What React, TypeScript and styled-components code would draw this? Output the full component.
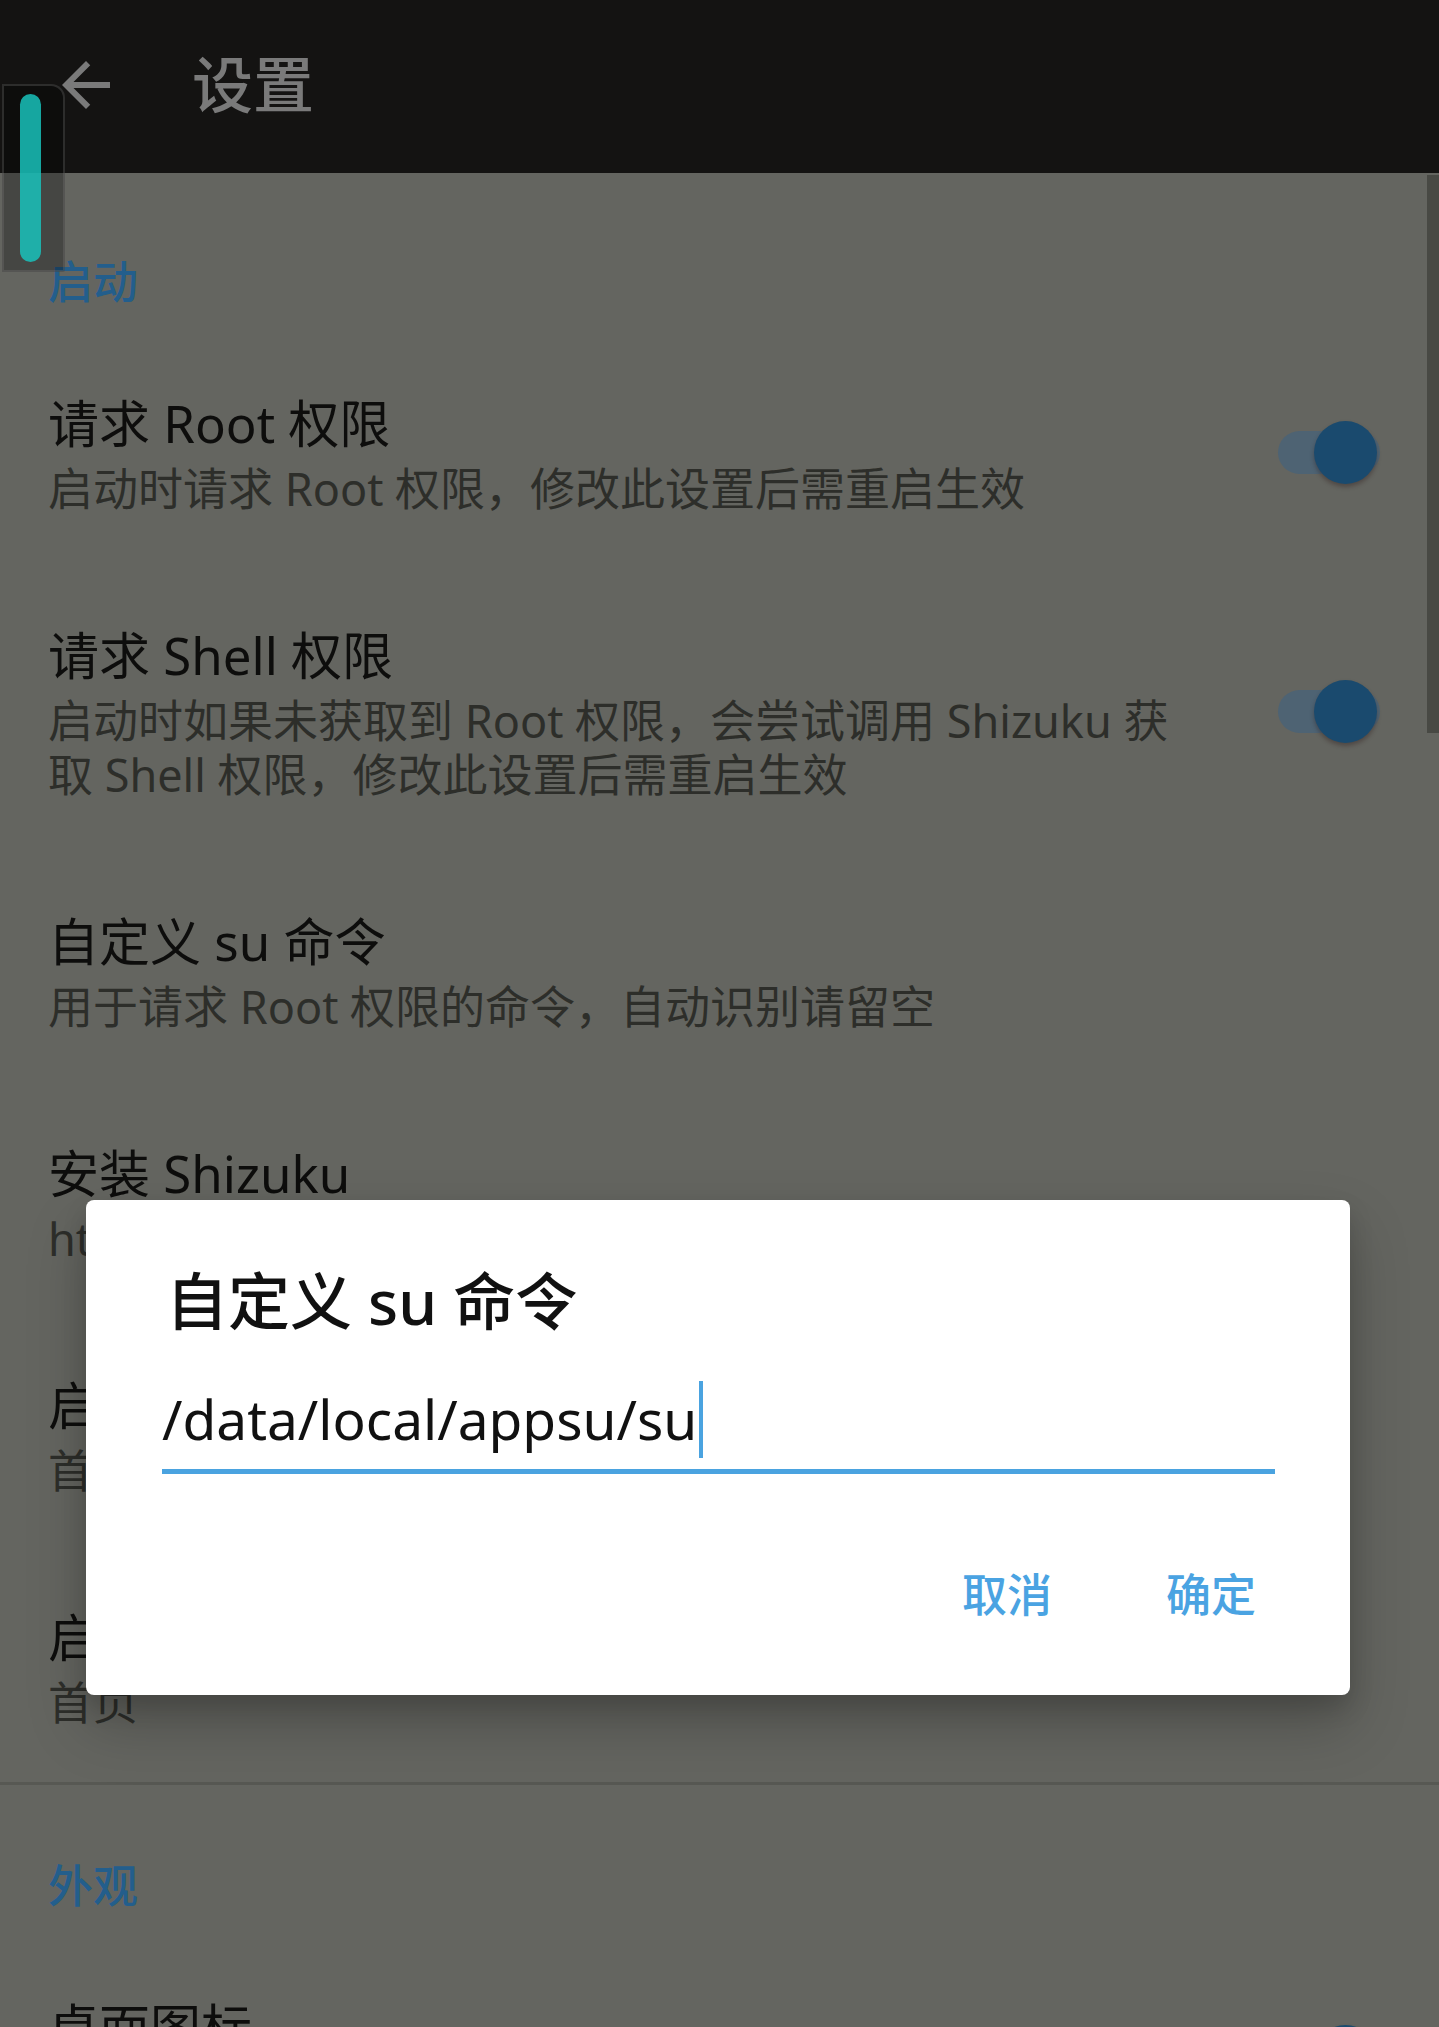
import React from 'react'
import styled, { createGlobalStyle } from 'styled-components'

const GlobalStyle = createGlobalStyle`
  html, body {
    margin: 0;
    padding: 0;
    background: #646560;
  }
  body {
    font-family: 'Noto Sans', 'Noto Sans CJK SC', sans-serif;
    overflow: hidden;
  }
`

const Screen = styled.div`
  position: relative;
  width: 1439px;
  height: 2027px;
  overflow: hidden;
  background: #646560;
`

const TopBar = styled.header`
  display: flex;
  align-items: center;
  height: 173px;
  padding: 0 0 4px 50px;
  box-sizing: border-box;
  background: #141312;
`
const BackIcon = styled.svg`
  width: 72px;
  height: 72px;
  flex-shrink: 0;
  fill: #7a7a7a;
`
const PageTitle = styled.h1`
  margin: 0 0 0 70px;
  font-size: 61px;
  font-weight: 500;
  line-height: 1;
  color: #7a7a7a;
`

const Section = styled.section<{ $divider?: boolean }>`
  border-bottom: ${p => (p.$divider ? '3px solid #575853' : 'none')};
`
const Category = styled.div<{ $top?: number }>`
  padding: ${p => p.$top ?? 79}px 48px 24px;
  font-size: 45px;
  line-height: 60px;
  font-weight: 500;
  color: #235e8c;
`
const Item = styled.div`
  display: flex;
  align-items: center;
  justify-content: space-between;
  gap: 40px;
  padding: 52px 59px 52px 48px;
`
const ItemText = styled.div`
  display: flex;
  flex-direction: column;
  gap: 4px;
  flex: 1;
  min-width: 0;
`
const ItemTitle = styled.div`
  font-size: 51px;
  line-height: 70px;
  color: #0d0d0c;
  white-space: nowrap;
`
const ItemSummary = styled.div`
  font-size: 45px;
  line-height: 54px;
  color: #2d2e2a;
  white-space: nowrap;
`

const Switch = styled.div`
  position: relative;
  width: 102px;
  height: 63px;
  flex-shrink: 0;
`
const Track = styled.div`
  position: absolute;
  left: 0;
  right: 0;
  top: 10px;
  height: 43px;
  border-radius: 22px;
  background: #4e6373;
`
const Thumb = styled.div`
  position: absolute;
  right: 3px;
  top: 0;
  width: 63px;
  height: 63px;
  border-radius: 50%;
  background: #1a4a6e;
  box-shadow: 0 3px 4px rgba(40, 20, 20, 0.35);
`

// floating fast-scroll handle on the left edge
const ScrollHandle = styled.div`
  position: absolute;
  left: 2px;
  top: 84px;
  width: 63px;
  height: 188px;
  box-sizing: border-box;
  background: rgba(0, 0, 0, 0.3);
  border: 2px solid rgba(120, 120, 120, 0.3);
  border-radius: 0 14px 2px 0;
`
const HandleBar = styled.div`
  position: absolute;
  left: 16px;
  top: 8px;
  width: 21px;
  height: 168px;
  border-radius: 11px;
  background: rgba(24, 196, 190, 0.84);
`
const ScrollThumb = styled.div`
  position: absolute;
  right: 0;
  top: 175px;
  width: 12px;
  height: 558px;
  background: #484944;
`

const Dialog = styled.div`
  position: absolute;
  left: 86px;
  top: 1200px;
  width: 1264px;
  box-sizing: border-box;
  padding: 61px 75px 52px 76px;
  background: #ffffff;
  border-radius: 8px;
  box-shadow: 0 30px 60px rgba(0, 0, 0, 0.22), 0 12px 24px rgba(0, 0, 0, 0.14);
`
const DialogTitle = styled.h2`
  margin: 0;
  padding-left: 4px;
  font-size: 62px;
  line-height: 80px;
  font-weight: 500;
  color: #111111;
`
const Field = styled.div`
  display: flex;
  align-items: center;
  margin-top: 38px;
  padding-bottom: 10px;
  border-bottom: 5px solid #4aa3e0;
`
const FieldValue = styled.span`
  font-size: 55px;
  line-height: 80px;
  color: #111111;
`
const Caret = styled.span`
  width: 4px;
  height: 77px;
  margin-left: 2px;
  background: #4aa3e0;
`
const Actions = styled.div`
  display: flex;
  justify-content: flex-end;
  gap: 66px;
  margin: 73px -5px 0 0;
`
const ActionButton = styled.button`
  border: 0;
  background: none;
  padding: 18px 24px;
  font-family: 'Noto Sans', 'Noto Sans CJK SC', sans-serif;
  font-size: 45px;
  line-height: 60px;
  font-weight: 500;
  color: #4aa3e2;
`

type Pref = {
  title: string
  summary: React.ReactNode
  toggle?: boolean
}

const startup: Pref[] = [
  { title: '请求 Root 权限', summary: '启动时请求 Root 权限，修改此设置后需重启生效', toggle: true },
  {
    title: '请求 Shell 权限',
    summary: (
      <>
        启动时如果未获取到 Root 权限，会尝试调用 Shizuku 获<br />
        取 Shell 权限，修改此设置后需重启生效
      </>
    ),
    toggle: true,
  },
  { title: '自定义 su 命令', summary: '用于请求 Root 权限的命令，自动识别请留空' },
  { title: '安装 Shizuku', summary: 'https://shizuku.rikka.app/' },
  { title: '启动页面', summary: '首页' },
  { title: '启动后显示', summary: '首页' },
]

const PrefRow = ({ title, summary, toggle }: Pref) => (
  <Item>
    <ItemText>
      <ItemTitle>{title}</ItemTitle>
      <ItemSummary>{summary}</ItemSummary>
    </ItemText>
    {toggle && (
      <Switch>
        <Track />
        <Thumb />
      </Switch>
    )}
  </Item>
)

export default function App() {
  return (
    <Screen>
      <GlobalStyle />
      <TopBar>
        <BackIcon viewBox="0 0 24 24">
          <path d="M20 11H7.83l5.59-5.59L12 4l-8 8 8 8 1.41-1.41L7.83 13H20v-2z" />
        </BackIcon>
        <PageTitle>设置</PageTitle>
      </TopBar>

      <Section $divider>
        <Category>启动</Category>
        {startup.map(p => (
          <PrefRow key={p.title} {...p} />
        ))}
      </Section>

      <Section>
        <Category $top={71}>外观</Category>
        <PrefRow title="桌面图标" summary="在桌面上显示应用图标" toggle />
      </Section>

      <ScrollHandle>
        <HandleBar />
      </ScrollHandle>
      <ScrollThumb />

      <Dialog>
        <DialogTitle>自定义 su 命令</DialogTitle>
        <Field>
          <FieldValue>/data/local/appsu/su</FieldValue>
          <Caret />
        </Field>
        <Actions>
          <ActionButton>取消</ActionButton>
          <ActionButton>确定</ActionButton>
        </Actions>
      </Dialog>
    </Screen>
  )
}
